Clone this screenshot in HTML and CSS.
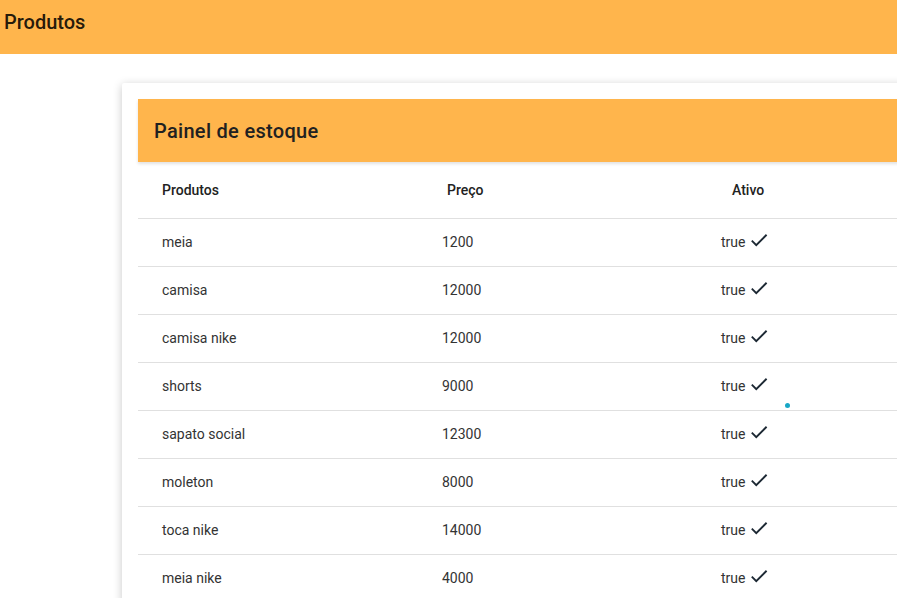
FILE: index.html
```html
<!DOCTYPE html>
<html lang="pt">
<head>
<meta charset="utf-8">
<title>Produtos</title>
<link rel="stylesheet" href="styles.css">
</head>
<body>
<header class="topbar"><h1 class="topbar-title">Produtos</h1></header>
<main class="content">
  <section class="card">
    <div class="card-header"><h2 class="card-title">Painel de estoque</h2></div>
    <div class="table">
      <div class="row head">
        <div class="cell c-name">Produtos</div>
        <div class="cell c-price">Preço</div>
        <div class="cell c-active">Ativo</div>
      </div>
      <div class="row"><div class="cell c-name">meia</div><div class="cell c-price">1200</div><div class="cell c-active">true<svg class="check" viewBox="0 0 24 24"><path d="M9 16.17L4.83 12l-1.42 1.41L9 19 21 7l-1.41-1.41z"/></svg></div></div>
      <div class="row"><div class="cell c-name">camisa</div><div class="cell c-price">12000</div><div class="cell c-active">true<svg class="check" viewBox="0 0 24 24"><path d="M9 16.17L4.83 12l-1.42 1.41L9 19 21 7l-1.41-1.41z"/></svg></div></div>
      <div class="row"><div class="cell c-name">camisa nike</div><div class="cell c-price">12000</div><div class="cell c-active">true<svg class="check" viewBox="0 0 24 24"><path d="M9 16.17L4.83 12l-1.42 1.41L9 19 21 7l-1.41-1.41z"/></svg></div></div>
      <div class="row"><div class="cell c-name">shorts</div><div class="cell c-price">9000</div><div class="cell c-active">true<svg class="check" viewBox="0 0 24 24"><path d="M9 16.17L4.83 12l-1.42 1.41L9 19 21 7l-1.41-1.41z"/></svg></div><span class="dot"></span></div>
      <div class="row"><div class="cell c-name">sapato social</div><div class="cell c-price">12300</div><div class="cell c-active">true<svg class="check" viewBox="0 0 24 24"><path d="M9 16.17L4.83 12l-1.42 1.41L9 19 21 7l-1.41-1.41z"/></svg></div></div>
      <div class="row"><div class="cell c-name">moleton</div><div class="cell c-price">8000</div><div class="cell c-active">true<svg class="check" viewBox="0 0 24 24"><path d="M9 16.17L4.83 12l-1.42 1.41L9 19 21 7l-1.41-1.41z"/></svg></div></div>
      <div class="row"><div class="cell c-name">toca nike</div><div class="cell c-price">14000</div><div class="cell c-active">true<svg class="check" viewBox="0 0 24 24"><path d="M9 16.17L4.83 12l-1.42 1.41L9 19 21 7l-1.41-1.41z"/></svg></div></div>
      <div class="row"><div class="cell c-name">meia nike</div><div class="cell c-price">4000</div><div class="cell c-active">true<svg class="check" viewBox="0 0 24 24"><path d="M9 16.17L4.83 12l-1.42 1.41L9 19 21 7l-1.41-1.41z"/></svg></div></div>
    </div>
  </section>
</main>
</body>
</html>
```
FILE: styles.css
```css
html, body {
  margin: 0;
  padding: 0;
  overflow: hidden;
  background: #fff;
  font-family: Roboto, "Liberation Sans", sans-serif;
  color: rgba(0,0,0,0.87);
}
.topbar {
  height: 54px;
  background: #ffb54c;
  display: flex;
  align-items: center;
  padding-left: 4px;
}
.topbar-title {
  margin: 0;
  font-size: 20px;
  font-weight: 500;
  line-height: 1;
  position: relative;
  top: -5px;
}
.content {
  padding: 29px 0 0 122px;
}
.card {
  width: 840px;
  background: #fff;
  padding: 16px 0 0 16px;
  box-shadow: 0 2px 10px rgba(0,0,0,0.22);
  border-radius: 2px;
}
.card-header {
  height: 63px;
  background: #ffb54c;
  display: flex;
  align-items: center;
  padding-left: 16px;
  box-shadow: 0 2px 3px rgba(0,0,0,0.12);
  position: relative;
}
.card-title {
  margin: 0;
  font-size: 20px;
  font-weight: 500;
  letter-spacing: 0.3px;
  color: #212121;
}
.row {
  box-sizing: border-box;
  display: grid;
  grid-template-columns: 280px 280px 100px 1fr;
  height: 48px;
  padding-bottom: 1px;
  align-items: center;
  border-bottom: 1px solid #e0e0e0;
  font-size: 14px;
  color: #333;
  position: relative;
}
.row.head {
  height: 57px;
  padding-bottom: 0;
  font-size: 14px;
  font-weight: 500;
  color: #222;
}
.cell { padding-left: 24px; }
.head .c-price { padding-left: 29px; }
.c-active {
  padding-left: 23px;
  display: flex;
  align-items: center;
  gap: 3px;
}
.head .c-active { padding-left: 34px; }
.check {
  width: 22px;
  height: 22px;
  fill: #1c2833;
  margin-top: -4px;
}
.dot {
  position: absolute;
  left: 647px;
  top: 40px;
  width: 5px;
  height: 5px;
  border-radius: 50%;
  background: #18a7c6;
}
```
